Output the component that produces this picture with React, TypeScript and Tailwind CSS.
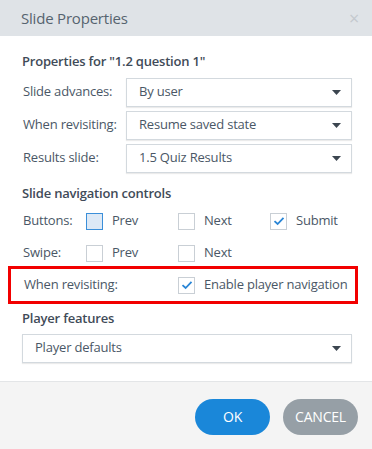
import React from 'react';

const font = { fontFamily: '"Open Sans", "Noto Sans", sans-serif' };

function Caret() {
  return (
    <svg width="9" height="5" viewBox="0 0 9 5" className="shrink-0">
      <path d="M0 0 L9 0 L4.5 5 Z" fill="#3c4650" />
    </svg>
  );
}

function Select({ value, className = '' }: { value: string; className?: string }) {
  return (
    <div
      className={`flex h-[29px] items-center justify-between border border-[#d3d9de] bg-white pl-[12px] pr-[10px] text-[13px] text-[#4a5766] shadow-[0_1px_1px_rgba(0,0,0,0.08)] ${className}`}
    >
      <span>{value}</span>
      <Caret />
    </div>
  );
}

function Check({ checked, focused }: { checked?: boolean; focused?: boolean }) {
  return (
    <span
      className={`flex h-[17px] w-[17px] shrink-0 items-center justify-center border ${
        focused ? 'border-[#3b8fd9] bg-[#dde9f6]' : 'border-[#c9cfd5] bg-white'
      }`}
    >
      {checked ? (
        <svg width="12" height="10" viewBox="0 0 12 10">
          <path d="M1.5 5.2 L4.6 8 L10.5 1.8" fill="none" stroke="#2a86d6" strokeWidth="1.8" />
        </svg>
      ) : null}
    </span>
  );
}

function Option({ label, checked, focused, className = '' }: { label: string; checked?: boolean; focused?: boolean; className?: string }) {
  return (
    <div className={`flex items-center gap-[9px] ${className}`}>
      <Check checked={checked} focused={focused} />
      <span>{label}</span>
    </div>
  );
}

export default function App() {
  return (
    <div className="flex h-[449px] w-[372px] flex-col bg-white tracking-[-0.2px] text-[#4a5766]" style={font}>
      <div className="flex h-[36px] shrink-0 items-center justify-between bg-[#dfe3e7] pl-[21px] pr-[13px]">
        <span className="text-[15px] text-[#56636f]">Slide Properties</span>
        <span className="text-[18px] leading-none text-[#c4c9ce]">×</span>
      </div>

      <div className="flex-1 pl-[22px] pr-[20px] pt-[16px] text-[13px]">
        <div className="text-[13px] font-semibold text-[#3f4b58]">Properties for "1.2 question 1"</div>

        <div className="mt-[6px] flex flex-col gap-[4px]">
          {[
            ['Slide advances:', 'By user'],
            ['When revisiting:', 'Resume saved state'],
            ['Results slide:', '1.5 Quiz Results'],
          ].map(([l, v]) => (
            <div key={l} className="flex items-center">
              <span className="w-[104px] shrink-0 pl-[1px]">{l}</span>
              <Select value={v} className="flex-1" />
            </div>
          ))}
        </div>

        <div className="mt-[11px] font-semibold text-[#3f4b58]">Slide navigation controls</div>

        <div className="mt-[9px] flex h-[18px] items-center">
          <span className="w-[64px] shrink-0 pl-[1px]">Buttons:</span>
          <Option label="Prev" focused className="w-[92px]" />
          <Option label="Next" className="w-[92px]" />
          <Option label="Submit" checked />
        </div>
        <div className="mt-[14px] flex h-[18px] items-center">
          <span className="w-[64px] shrink-0 pl-[1px]">Swipe:</span>
          <Option label="Prev" className="w-[92px]" />
          <Option label="Next" />
        </div>

        <div className="mt-[4px] ml-[-14px] mr-[-6px] flex h-[38px] items-center border-[3px] border-[#f20000] pl-[12px]">
          <span className="w-[155px] shrink-0 pl-[1px]">When revisiting:</span>
          <Option label="Enable player navigation" checked />
        </div>

        <div className="mt-[5px] font-semibold text-[#3f4b58]">Player features</div>
        <Select value="Player defaults" className="mt-[5px]" />
      </div>

      <div className="flex h-[68px] shrink-0 items-center justify-end gap-[13px] border-t border-[#e3e5e7] bg-[#f4f4f4] pr-[14px] pt-[2px]">
        <button className="h-[36px] w-[75px] rounded-full bg-[#1a87d9] text-[14px] text-white">OK</button>
        <button className="h-[36px] w-[75px] rounded-full bg-[#969fa6] text-[14px] text-white">CANCEL</button>
      </div>
    </div>
  );
}
